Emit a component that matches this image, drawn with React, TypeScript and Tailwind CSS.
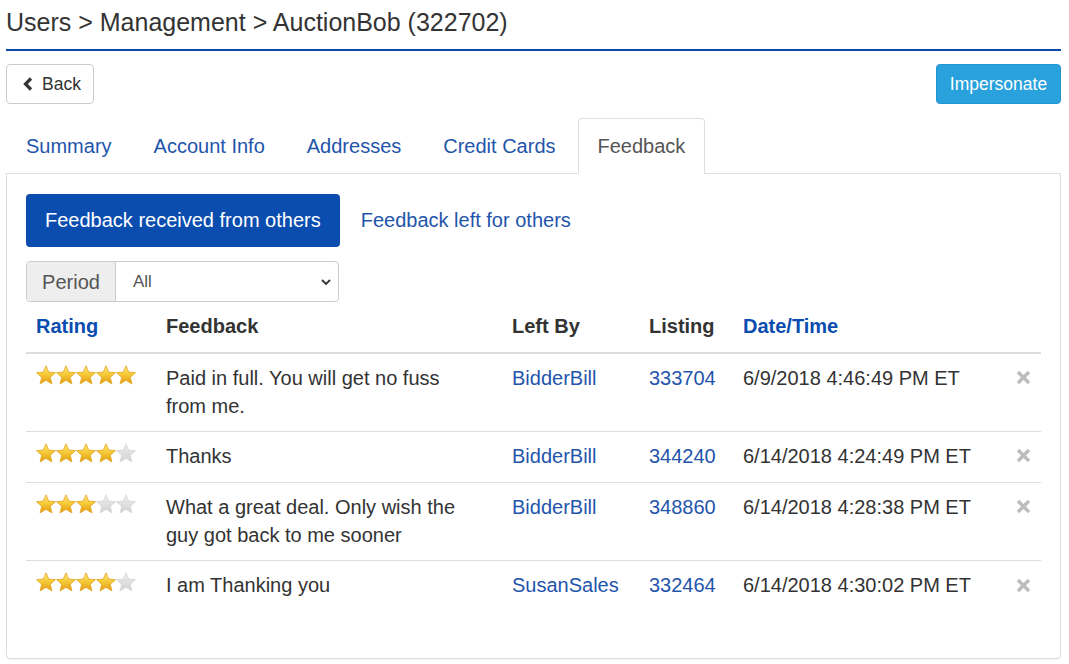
import React from "react";

const STAR_POINTS =
  "10,0.8 12.7,7.1 19.5,7.7 14.3,12.2 15.9,18.9 10,15.3 4.1,18.9 5.7,12.2 0.5,7.7 7.3,7.1";

function Star({ filled, id }: { filled: boolean; id: string }) {
  return (
    <svg width="20" height="20" viewBox="0 0 20 20">
      <defs>
        <linearGradient id={id} x1="0" y1="0" x2="0" y2="1">
          {filled ? (
            <>
              <stop offset="0" stopColor="#fde98a" />
              <stop offset="0.45" stopColor="#f7cc3a" />
              <stop offset="1" stopColor="#e09a12" />
            </>
          ) : (
            <>
              <stop offset="0" stopColor="#eeeeee" />
              <stop offset="1" stopColor="#d2d2d2" />
            </>
          )}
        </linearGradient>
      </defs>
      <polygon
        points={STAR_POINTS}
        fill={`url(#${id})`}
        stroke={filled ? "#e2a51c" : "#d6d6d6"}
        strokeWidth="0.8"
        strokeLinejoin="round"
      />
    </svg>
  );
}

function Stars({ n, row }: { n: number; row: number }) {
  return (
    <div className="flex mt-[1px]">
      {[0, 1, 2, 3, 4].map((i) => (
        <Star key={i} filled={i < n} id={`s${row}-${i}`} />
      ))}
    </div>
  );
}

function RemoveIcon() {
  return (
    <svg width="15" height="15" viewBox="0 0 15 15">
      <path d="M2 2 L13 13 M13 2 L2 13" stroke="#bdbdbd" strokeWidth="3.4" />
    </svg>
  );
}

const rows = [
  { stars: 5, text: "Paid in full. You will get no fuss from me.", by: "BidderBill", listing: "333704", date: "6/9/2018 4:46:49 PM ET" },
  { stars: 4, text: "Thanks", by: "BidderBill", listing: "344240", date: "6/14/2018 4:24:49 PM ET" },
  { stars: 3, text: "What a great deal. Only wish the guy got back to me sooner", by: "BidderBill", listing: "348860", date: "6/14/2018 4:28:38 PM ET" },
  { stars: 4, text: "I am Thanking you", by: "SusanSales", listing: "332464", date: "6/14/2018 4:30:02 PM ET" },
];

const GRID = "grid grid-cols-[130px_346px_137px_94px_272px_36px]";

export default function App() {
  return (
    <div className="w-[1069px] h-[664px] bg-white pl-[6px] pr-[8px] font-['Liberation_Sans',Arial,sans-serif] text-[#333]">
      <div className="text-[25px] leading-[28px] pt-[8px] pb-[13px] border-b-2 border-[#0b4aa5]">
        Users &gt; Management &gt; AuctionBob (322702)
      </div>

      <div className="flex justify-between mt-[13px]">
        <button className="h-[40px] w-[88px] pl-[15px] border border-[#ccc] rounded-[4px] flex items-center gap-[8px] text-[17.5px] text-[#333] bg-white">
          <svg width="12" height="14" viewBox="0 0 12 14">
            <path d="M9 1.5 L3.5 7 L9 12.5" fill="none" stroke="#333" strokeWidth="3.2" />
          </svg>
          Back
        </button>
        <button className="h-[40px] w-[125px] bg-[#28a1dd] border border-[#2196d2] rounded-[4px] text-white text-[17.5px]">
          Impersonate
        </button>
      </div>

      <div className="mt-[14px] flex relative z-10">
        {["Summary", "Account Info", "Addresses", "Credit Cards"].map((t) => (
          <a key={t} className="px-[19px] py-[12.5px] leading-[28px] text-[20px] text-[#1f55ab] mr-[2px] border border-transparent">
            {t}
          </a>
        ))}
        <a className="px-[19px] py-[12.5px] leading-[28px] text-[20px] text-[#555] border border-[#ddd] border-b-white bg-white rounded-t-[4px] -mb-px">
          Feedback
        </a>
      </div>

      <div className="border border-[#ddd] rounded-b-[4px] px-[19px] pt-[20px] pb-[20px] h-[486px] shadow-[0_1px_1px_rgba(0,0,0,0.05)]">
        <div className="flex gap-[2px]">
          <a className="px-[19px] py-[12px] leading-[29px] text-[20px] bg-[#0a4daf] text-white rounded-[4px]">
            Feedback received from others
          </a>
          <a className="px-[19px] py-[12px] leading-[29px] text-[20px] text-[#1f55ab]">
            Feedback left for others
          </a>
        </div>

        <div className="mt-[14px] w-[313px] h-[41px] border border-[#ccc] rounded-[4px] flex">
          <div className="w-[89px] bg-[#eee] border-r border-[#ccc] flex items-center justify-center text-[20px] text-[#555] rounded-l-[4px]">
            Period
          </div>
          <div className="flex-1 flex items-center justify-between pl-[17px] pr-[7px] text-[17px] text-[#555]">
            <span>All</span>
            <svg width="10" height="8" viewBox="0 0 10 8">
              <path d="M1 2 L5 6 L9 2" fill="none" stroke="#333" strokeWidth="1.8" />
            </svg>
          </div>
        </div>

        <div className={`${GRID} border-b-2 border-[#ddd] text-[20px] leading-[28.57px] font-bold`}>
          <div className="px-[10px] pt-[10px] pb-[11px] text-[#0a4daf]">Rating</div>
          <div className="px-[10px] pt-[10px] pb-[11px]">Feedback</div>
          <div className="px-[10px] pt-[10px] pb-[11px]">Left By</div>
          <div className="px-[10px] pt-[10px] pb-[11px]">Listing</div>
          <div className="px-[10px] pt-[10px] pb-[11px] text-[#0a4daf]">Date/Time</div>
          <div className="px-[10px] pt-[10px] pb-[11px]" />
        </div>

        {rows.map((r, i) => (
          <div
            key={i}
            className={`${GRID} min-h-[51px] text-[20px] leading-[28.57px] ${i < rows.length - 1 ? "border-b border-[#ddd]" : ""}`}
          >
            <div className="p-[10px]">
              <Stars n={r.stars} row={i} />
            </div>
            <div className="pl-[10px] pr-[40px] py-[10px]">{r.text}</div>
            <div className="p-[10px] text-[#1f55ab]">{r.by}</div>
            <div className="p-[10px] text-[#1f55ab]">{r.listing}</div>
            <div className="p-[10px]">{r.date}</div>
            <div className="p-[10px]">
              <div className="h-[28.57px] flex items-center justify-center">
                <RemoveIcon />
              </div>
            </div>
          </div>
        ))}
      </div>
    </div>
  );
}
